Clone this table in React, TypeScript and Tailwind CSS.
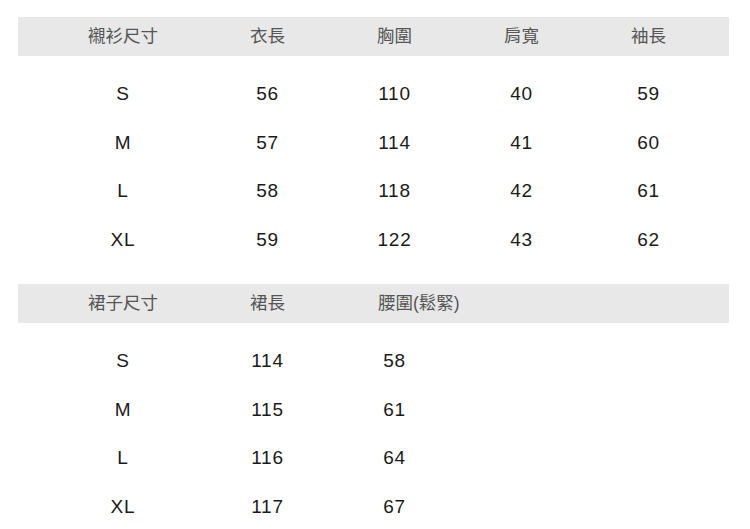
import React from 'react';

const shirtHead = ['襯衫尺寸', '衣長', '胸圍', '肩寬', '袖長'];
const shirtRows = [
  ['S', '56', '110', '40', '59'],
  ['M', '57', '114', '41', '60'],
  ['L', '58', '118', '42', '61'],
  ['XL', '59', '122', '43', '62'],
];

const skirtHead = ['裙子尺寸', '裙長', '腰圍(鬆緊)'];
const skirtRows = [
  ['S', '114', '58'],
  ['M', '115', '61'],
  ['L', '116', '64'],
  ['XL', '117', '67'],
];

// column widths so the text centres land on 122 / 267 / 394 / 521 / 648
const colClass = ['w-[128px] ml-[41px]', 'w-[127px] ml-[17px]', 'w-[127px]', 'w-[127px]', 'w-[127px]'];

const Cells: React.FC<{ items: string[]; leftThird?: boolean }> = ({ items, leftThird }) => (
  <>
    {items.map((t, i) => (
      <div
        key={i}
        className={`${colClass[i]} shrink-0 ${leftThird && i === 2 ? 'text-left pl-[47px] whitespace-nowrap' : 'text-center'}`}
      >
        {t}
      </div>
    ))}
  </>
);

const App: React.FC = () => {
  return (
    <div
      className="w-[750px] h-[529px] bg-white overflow-hidden pt-[17px]"
      style={{ fontFamily: '"Liberation Sans", "Noto Sans CJK TC", sans-serif' }}
    >
      <div className="ml-[18px] w-[711px] h-[39px] bg-[#e8e8e8] flex items-center text-[17.5px] text-[#555]">
        <Cells items={shirtHead} />
      </div>
      <div className="mt-[14px]">
        {shirtRows.map((r, i) => (
          <div key={i} className="ml-[18px] h-[48.5px] flex items-center text-[19px] text-[#1a1a1a] tracking-[0.8px]">
            <Cells items={r} />
          </div>
        ))}
      </div>

      <div className="mt-[20px] ml-[18px] w-[711px] h-[39px] bg-[#e8e8e8] flex items-center text-[17.5px] text-[#555]">
        <Cells items={skirtHead} leftThird />
      </div>
      <div className="mt-[14px]">
        {skirtRows.map((r, i) => (
          <div key={i} className="ml-[18px] h-[48.5px] flex items-center text-[19px] text-[#1a1a1a] tracking-[0.8px]">
            <Cells items={r} />
          </div>
        ))}
      </div>
    </div>
  );
};

export default App;
